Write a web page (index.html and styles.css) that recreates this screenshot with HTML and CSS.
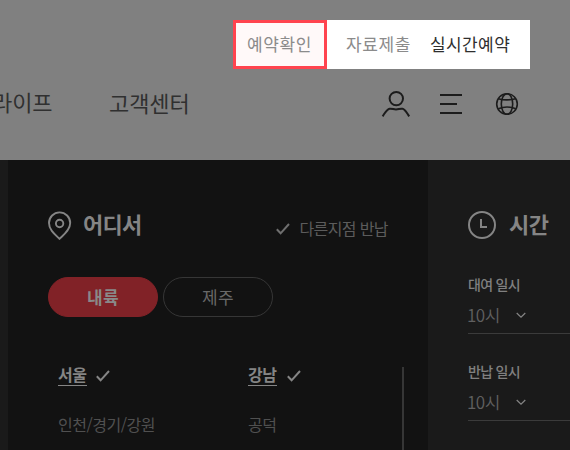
FILE: index.html
```html
<!DOCTYPE html>
<html lang="ko">
<head>
<meta charset="utf-8">
<title>예약</title>
<link rel="stylesheet" href="styles.css">
</head>
<body>
<header class="header">
  <nav class="utility">
    <a class="utility-link selected">예약확인</a>
    <a class="utility-link submit">자료제출</a>
    <a class="utility-link realtime">실시간예약</a>
  </nav>
  <div class="main-bar">
    <nav class="main-nav">
      <a class="life">라이프</a>
      <a>고객센터</a>
    </nav>
    <div class="tools">
      <svg width="30" height="28" viewBox="0 0 30 28" fill="none" stroke="#1c1c1c" stroke-width="2"><circle cx="15.3" cy="8.6" r="6.7"/><path d="M1.6 26.4C4.3 22.4 6 19 8.5 18.7C12 18.4 12 19.5 15 19.5S18 18.4 21.5 18.7C24 19 25.4 22.4 28.2 26.4"/></svg>
      <svg class="menu-icon" width="22" height="20" viewBox="0 0 22 20" fill="none" stroke="#1c1c1c" stroke-width="2"><path d="M0 1H22M0 10H17M0 19H22"/></svg>
      <svg class="globe" width="24" height="24" viewBox="0 0 24 24" fill="none" stroke="#1c1c1c" stroke-width="1.6"><circle cx="12" cy="12" r="10.3"/><ellipse cx="12" cy="12" rx="5.7" ry="10.3"/><path d="M3.2 6.7Q12 9.1 20.8 6.7M3.2 16.8Q12 13.2 20.8 16.8"/></svg>
    </div>
  </div>
</header>
<main class="panels">
  <section class="where">
    <div class="where-head">
      <svg width="24" height="30" viewBox="0 0 24 30" fill="none" stroke="#858585" stroke-width="1.9"><path d="M11.5 28.8C7 24.5 1 20 1 13A10.6 10.6 0 0 1 22.2 13C22.2 20 16 24.5 11.5 28.8Z"/><circle cx="11.6" cy="13.5" r="3.7"/></svg>
      <h2>어디서</h2>
      <div class="return">
        <svg width="14" height="12" viewBox="0 0 14 12" fill="none" stroke="#6f6f6f" stroke-width="2"><path d="M.8 6.3L4.6 10.3L13 1"/></svg>
        <span>다른지점 반납</span>
      </div>
    </div>
    <div class="tabs">
      <button class="tab active">내륙</button>
      <button class="tab">제주</button>
    </div>
    <div class="places">
      <div class="column">
        <div class="chosen"><span>서울</span><svg width="14" height="12" viewBox="0 0 14 12" fill="none" stroke="#858585" stroke-width="2"><path d="M.8 6.3L4.6 10.3L13 1"/></svg></div>
        <div class="place">인천/경기/강원</div>
      </div>
      <div class="column second">
        <div class="chosen"><span>강남</span><svg width="14" height="12" viewBox="0 0 14 12" fill="none" stroke="#858585" stroke-width="2"><path d="M.8 6.3L4.6 10.3L13 1"/></svg></div>
        <div class="place">공덕</div>
      </div>
    </div>
  </section>
  <section class="when">
    <div class="when-head">
      <svg width="28" height="28" viewBox="0 0 28 28" fill="none" stroke="#858585" stroke-width="2"><circle cx="14" cy="14" r="13"/><path d="M13 8V16H19"/></svg>
      <h2>시간</h2>
    </div>
    <div class="field">
      <div class="label">대여 일시</div>
      <div class="value"><span>10시</span><svg width="10" height="7" viewBox="0 0 10 7" fill="none" stroke="#858585" stroke-width="1.2"><path d="M.7 1L5 5.2L9.3 1"/></svg></div>
    </div>
    <div class="field">
      <div class="label">반납 일시</div>
      <div class="value"><span>10시</span><svg width="10" height="7" viewBox="0 0 10 7" fill="none" stroke="#858585" stroke-width="1.2"><path d="M.7 1L5 5.2L9.3 1"/></svg></div>
    </div>
  </section>
</main>
</body>
</html>
```
FILE: styles.css
```css
* { box-sizing: border-box; }
body {
  margin: 0;
  width: 570px;
  height: 450px;
  overflow: hidden;
  background: #1a1a1a;
  font-family: "Noto Sans CJK KR", sans-serif;
  white-space: nowrap;
}
svg { display: block; flex: none; }
h2 { margin: 0; font-size: 22px; line-height: 26px; font-weight: 700; letter-spacing: -0.8px; color: #858585; }
.header { height: 160px; padding-top: 20px; background: #808080; }
.utility { display: flex; width: 297px; height: 49px; margin-left: 233px; background: #fff; }
.utility-link { font-size: 17px; line-height: 48px; letter-spacing: 0.6px; color: #8b8b8b; }
.selected { width: 94px; padding-left: 11px; line-height: 42px; border: 3px solid #ff444f; background: #fff9f9; }
.submit { width: 103px; padding-left: 19px; }
.realtime { letter-spacing: 0.4px; color: #2e2e2e; }
.main-bar { display: flex; justify-content: space-between; height: 70px; padding-right: 51px; }
.main-nav { display: flex; padding-top: 17px; font-size: 22px; line-height: 32px; letter-spacing: -0.1px; color: #303030; }
.life { width: 117px; margin-left: -8px; margin-top: -1px; }
.tools { display: flex; padding-top: 21px; }
.menu-icon { margin: 4px 0 0 29px; }
.globe { margin: 2px 0 0 33px; }
.panels { display: flex; height: 290px; }
.where { width: 420px; margin-left: 8px; padding: 50px 40px 0; background: #121212; }
.where-head { display: flex; height: 67px; }
.where-head h2 { margin-left: 11px; }
.return { display: flex; gap: 9px; margin: 4px 0 0 auto; font-size: 16px; line-height: 28px; letter-spacing: -0.6px; color: #5c5c5c; }
.return svg { margin-top: 9px; }
.tabs { display: flex; gap: 5px; }
.tab { width: 110px; height: 40px; padding: 0; border: 1px solid #363636; border-radius: 20px; background: none; font: 400 17px/36px "Noto Sans CJK KR", sans-serif; letter-spacing: 0.4px; color: #686868; }
.tab.active { border-color: #812227; background: #812227; font-weight: 700; color: #898989; }
.places { display: flex; height: 100px; margin: 50px -16px 0 10px; border-right: 2px solid #363636; }
.column { flex: none; width: 190px; }
.second { width: 154px; }
.chosen { display: flex; gap: 9px; height: 19px; }
.second .chosen { gap: 10px; }
.chosen span { height: 19px; line-height: 15px; font-size: 16px; font-weight: 700; letter-spacing: -0.4px; color: #858585; border-bottom: 1px solid #858585; }
.chosen svg { margin-top: 3px; }
.place { margin-top: 26px; font-size: 16px; line-height: 24px; letter-spacing: -0.5px; color: #505050; }
.when { width: 142px; padding: 51px 0 0 40px; }
.when-head { display: flex; height: 60px; gap: 13px; }
.when-head h2 { line-height: 25px; letter-spacing: -0.4px; }
.field { height: 87px; }
.label { height: 28px; font-size: 14px; line-height: 26px; font-weight: 500; letter-spacing: -0.7px; color: #808080; }
.value { display: flex; gap: 18px; height: 35px; border-bottom: 1px solid #3b3b3b; font-size: 17px; line-height: 31px; letter-spacing: -0.5px; font-weight: 350; color: #606060; }
.value span { width: 30px; margin-left: -1px; }
.value svg { margin-top: 13px; margin-left: 1px; }
```
